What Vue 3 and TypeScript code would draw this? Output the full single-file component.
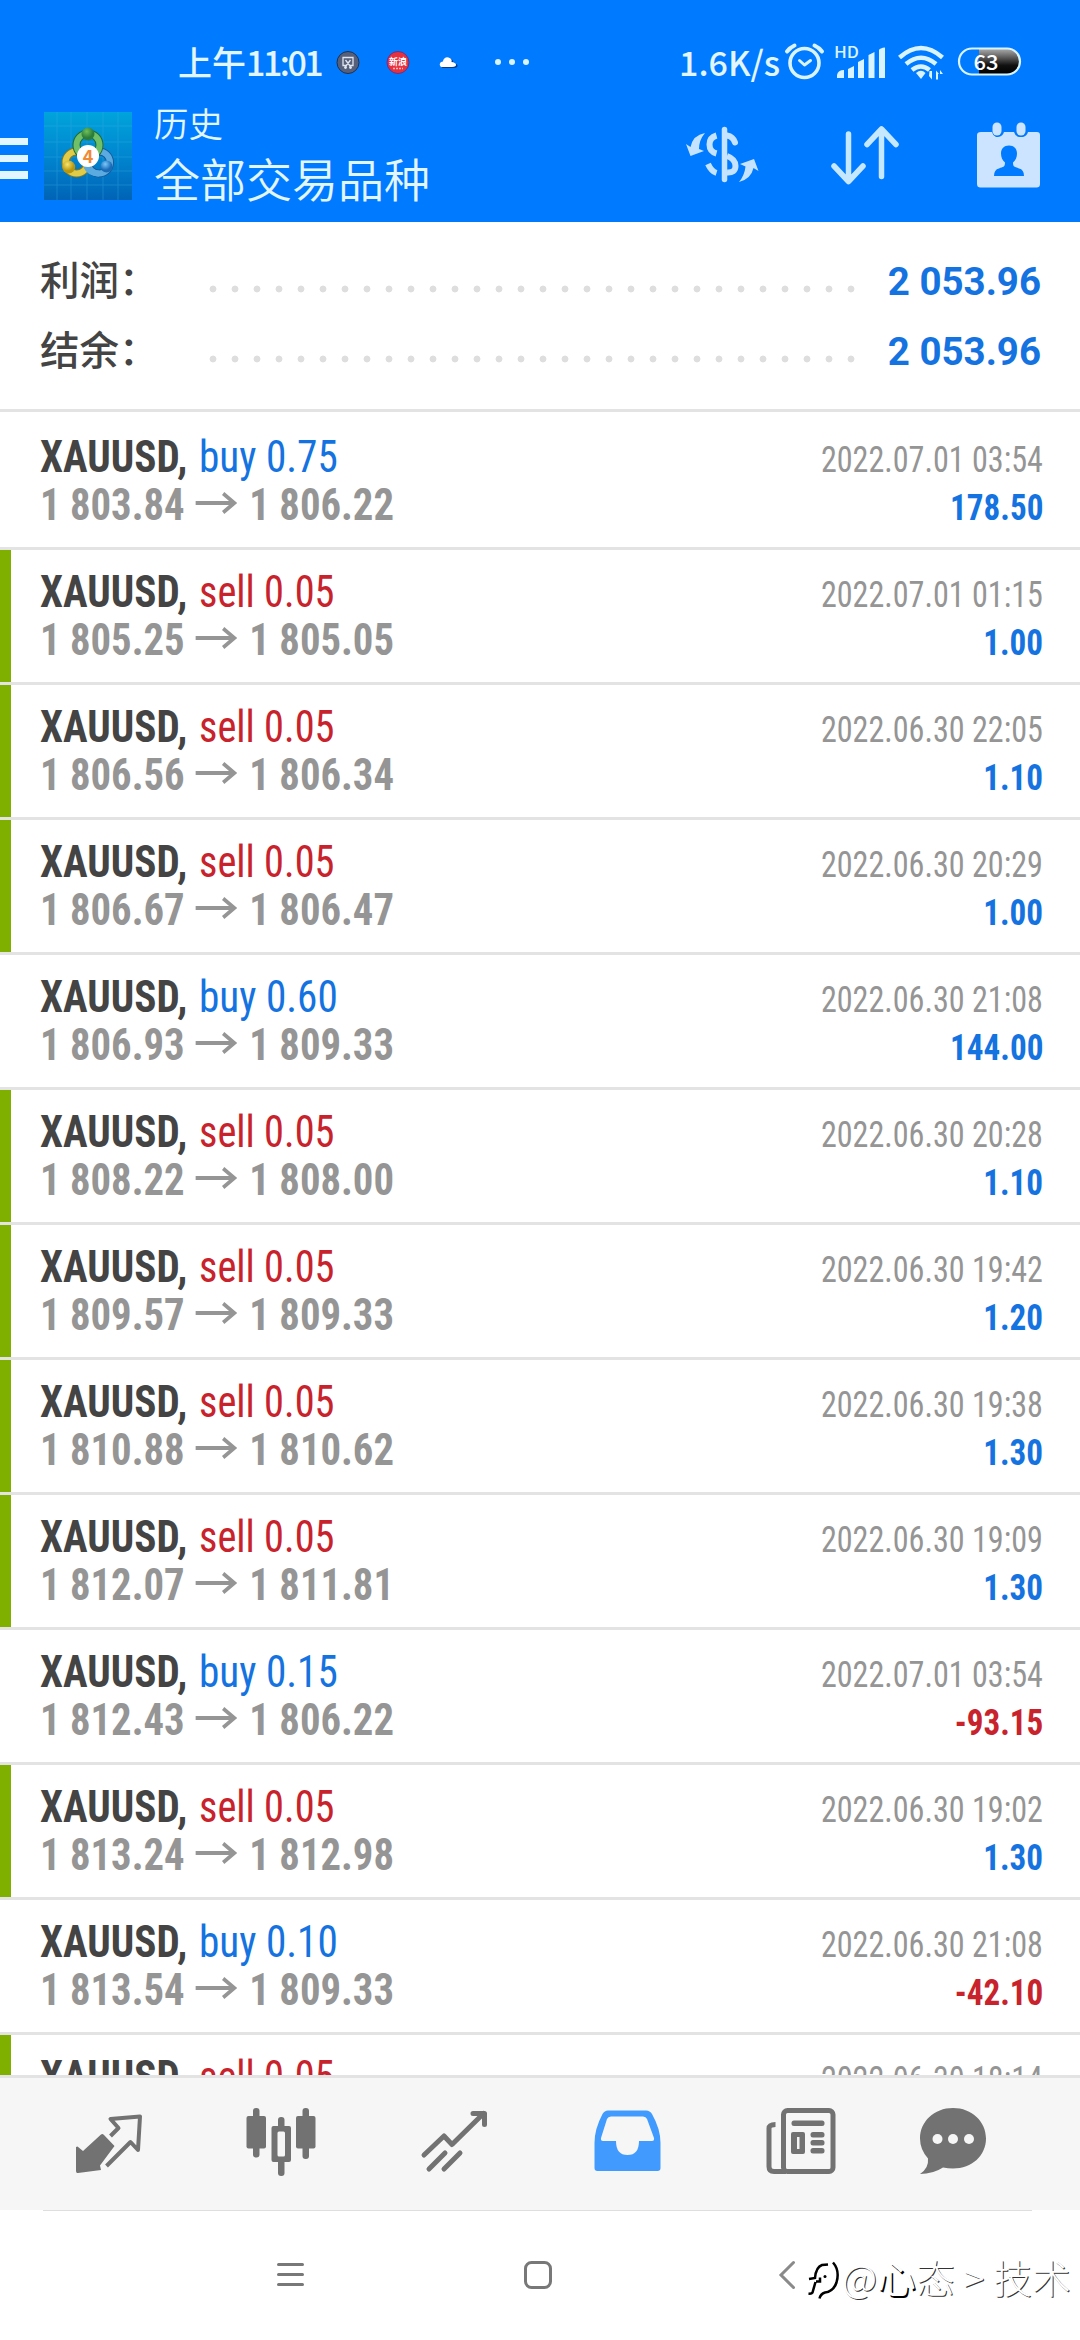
<script setup lang="ts">
interface Deal {
  side: 'buy' | 'sell'
  volume: string
  open: string
  close: string
  time: string
  profit: string
}

const summary = [
  { label: '利润', value: '2 053.96' },
  { label: '结余', value: '2 053.96' },
]

const d = (side: 'buy' | 'sell', volume: string, open: string, close: string, time: string, profit: string): Deal => ({
  side, volume, open, close, time, profit,
})

const deals: Deal[] = [
  d('buy', '0.75', '1 803.84', '1 806.22', '2022.07.01 03:54', '178.50'),
  d('sell', '0.05', '1 805.25', '1 805.05', '2022.07.01 01:15', '1.00'),
  d('sell', '0.05', '1 806.56', '1 806.34', '2022.06.30 22:05', '1.10'),
  d('sell', '0.05', '1 806.67', '1 806.47', '2022.06.30 20:29', '1.00'),
  d('buy', '0.60', '1 806.93', '1 809.33', '2022.06.30 21:08', '144.00'),
  d('sell', '0.05', '1 808.22', '1 808.00', '2022.06.30 20:28', '1.10'),
  d('sell', '0.05', '1 809.57', '1 809.33', '2022.06.30 19:42', '1.20'),
  d('sell', '0.05', '1 810.88', '1 810.62', '2022.06.30 19:38', '1.30'),
  d('sell', '0.05', '1 812.07', '1 811.81', '2022.06.30 19:09', '1.30'),
  d('buy', '0.15', '1 812.43', '1 806.22', '2022.07.01 03:54', '-93.15'),
  d('sell', '0.05', '1 813.24', '1 812.98', '2022.06.30 19:02', '1.30'),
  d('buy', '0.10', '1 813.54', '1 809.33', '2022.06.30 21:08', '-42.10'),
  d('sell', '0.05', '1 813.69', '1 813.42', '2022.06.30 18:14', '1.30'),
]
</script>

<template>
  <div class="screen">
    <header class="top">
      <div class="status">
        <span class="clock">上午<span class="digits">11:01</span></span>
        <svg class="notes" width="205" height="40" viewBox="330 42 205 40">
          <circle cx="348" cy="62.5" r="11" fill="#56607a" stroke="#20304f" stroke-width="1" />
          <path d="M346 65.500h-3V57.500h10v8h-3M345.500 60l5 6.500M350.500 60l-5 6.500" fill="none" stroke="#dfe6f2" stroke-width="1.300" />
          <circle cx="345.500" cy="67.500" r="1.400" fill="#dfe6f2" /><circle cx="350.500" cy="67.500" r="1.400" fill="#dfe6f2" />
          <circle cx="398" cy="62.500" r="11" fill="#e8313f" stroke="#5a2a8a" stroke-width=".8" />
          <text x="398" y="65" text-anchor="middle" font-size="9" font-weight="700" fill="#fff">新浪</text>
          <path d="M393 68.500h10" stroke="#ffb9b9" stroke-width="1.500" stroke-dasharray="2 1" />
          <path d="M441 67a3.500 3.500 0 0 1 0-5q2 0 2-1 1.500-4.500 5.500-3.500t3 4.500q4 .5 4.500 2.500t-4 2.500z" fill="#0a3c88" transform="translate(1.500 1)" />
          <path d="M441 67a3.500 3.500 0 0 1 0-5q2 0 2-1 1.500-4.500 5.500-3.500t3 4.500q4 .5 4.500 2.500t-4 2.500z" fill="#fff" />
          <g fill="#d9f3ff"><circle cx="498" cy="62" r="3" /><circle cx="512" cy="62" r="3" /><circle cx="526" cy="62" r="3" /></g>
        </svg>
        <span class="rate">1.6K/s</span>
        <svg class="signals" width="245" height="44" viewBox="780 40 245 44">
          <g fill="none" stroke="#d9f3ff">
            <circle cx="804.500" cy="63" r="14.500" stroke-width="3.600" />
            <path d="M799.500 60.500l5 4.500 6-4.500" stroke-width="3" stroke-linecap="round" stroke-linejoin="round" />
            <path d="M787 51.500q3-4 7.500-6M822 51.500q-3-4-7.500-6" stroke-width="4" stroke-linecap="round" />
          </g>
          <text x="834" y="58" font-size="15.500" font-weight="500" fill="#d9f3ff" textLength="25" lengthAdjust="spacingAndGlyphs">HD</text>
          <g fill="#d9f3ff">
            <path d="M837 78v-3q1-5 7-5v8zM848 78V69l6-3v12zM858 78V62l6-3v19zM868.500 78V55l6-3v26zM879 78V50q1-2 6-2.500V78z" />
            <path d="M916 73q5-4.500 9.500 0L921 79z" />
            <path d="M929.500 71h2.500v8.500l-3-3.500zM936 79.500v-9l3 3.500h-1v5.500zM940 70l3 4h-3z" />
          </g>
          <g fill="none" stroke="#d9f3ff" stroke-width="4.500">
            <path d="M899.500 57.500q21.500-19 43 0M906 64q15-12.500 30 0M912 70q9-7 17.500 0" />
          </g>
          <defs>
            <linearGradient id="battery" x1="0" y1="0" x2="0" y2="1"><stop offset="0" stop-color="#aaa" /><stop offset=".65" stop-color="#111" /><stop offset="1" stop-color="#000" /></linearGradient>
          </defs>
          <path d="M979 49h28a12.500 12.500 0 0 1 0 25h-28z" fill="url(#battery)" />
          <rect x="959" y="48.500" width="61" height="26" rx="13" fill="none" stroke="#d9f3ff" stroke-width="2.200" />
          <text x="973.500" y="69.500" font-size="21" font-weight="500" fill="#fff" textLength="25" lengthAdjust="spacingAndGlyphs">63</text>
        </svg>
      </div>
      <div class="appbar">
        <div class="menu"><i></i><i></i><i></i></div>
        <svg class="logo" width="88" height="88" viewBox="44 112 88 88">
          <defs>
            <linearGradient id="sea" x1="0" y1="0" x2="0" y2="1"><stop offset="0" stop-color="#00a4dc" /><stop offset=".5" stop-color="#0086cf" /><stop offset="1" stop-color="#0063b6" /></linearGradient>
            <radialGradient id="gr" cx=".4" cy=".3"><stop offset="0" stop-color="#6fbf5a" /><stop offset="1" stop-color="#2c7d3a" /></radialGradient>
            <radialGradient id="ye" cx=".4" cy=".3"><stop offset="0" stop-color="#f5e670" /><stop offset="1" stop-color="#b9960f" /></radialGradient>
            <radialGradient id="bl" cx=".4" cy=".3"><stop offset="0" stop-color="#7cc8fa" /><stop offset="1" stop-color="#1a6cb8" /></radialGradient>
          </defs>
          <rect x="44" y="112" width="88" height="88" fill="url(#sea)" />
          <path d="M57 112v88M71 112v88M87 112v88M103 112v88M118 112v88M44 126h88M44 142h88M44 157h88M44 171h88M44 185h88" stroke="#3ab0e6" stroke-width="1" opacity=".35" />
          <g fill="none">
            <circle cx="99" cy="162.500" r="11" stroke="#17599a" stroke-width="8" /><circle cx="99" cy="162.500" r="11" stroke="#5cabe0" stroke-width="6" />
            <circle cx="76.500" cy="162.500" r="11" stroke="#857a1c" stroke-width="8" /><circle cx="76.500" cy="162.500" r="11" stroke="#e0cc48" stroke-width="6" />
            <circle cx="88" cy="145" r="11.500" stroke="#1f6a34" stroke-width="8" /><circle cx="88" cy="145" r="11.500" stroke="#6fc068" stroke-width="6" />
            <path d="M86 166q4 8 13 7.500" stroke="#5cabe0" stroke-width="6" />
          </g>
          <circle cx="88" cy="134" r="6.500" fill="url(#gr)" />
          <circle cx="68.700" cy="167" r="6.500" fill="url(#ye)" />
          <circle cx="106.500" cy="166.500" r="6" fill="url(#bl)" />
          <circle cx="88" cy="156" r="11" fill="#fff" />
          <text x="88" y="162.500" text-anchor="middle" font-size="18" font-weight="700" fill="#f08a35">4</text>
        </svg>
        <div class="titles">
          <span class="t1">历史</span>
          <span class="t2">全部交易品种</span>
        </div>
        <svg class="act" width="80" height="70" viewBox="682 120 80 70">
          <g fill="none" stroke="#c5e3ff" stroke-width="6">
            <path d="M716.500 135.500q-7 2-7 9t7 9M716.500 173q-5-1.500-8.500-9" />
            <path d="M724.500 129.500v50" stroke-linecap="round" stroke-width="5.500" />
            <path d="M727 135.500q6 1 8 7" stroke-linecap="round" />
            <path d="M727 156q8.500 3 8.500 10t-8.500 6.500" />
          </g>
          <path d="M705 133q-12 2-14.500 14l-4.500-3 4.500 12 13.500-5-5-2q0-9 6-16zM739 182q12-3 14.500-14l5 3-4.500-12-14 5 5.500 2.500q-1 9-6.500 15.500z" fill="#c5e3ff" />
        </svg>
        <svg class="act2" width="80" height="70" viewBox="825 120 80 70">
          <path d="M848.500 134v47M834 166l14.500 15.500 14.500-15.500M881.500 176.500v-47M867 144.500l14.500-15.500 14.500 15.500" fill="none" stroke="#c5e8ff" stroke-width="5.500" stroke-linecap="round" stroke-linejoin="round" />
        </svg>
        <svg class="act3" width="68" height="70" viewBox="974 120 68 70">
          <path fill="#cce4ff" d="M980 132h11a7 7 0 0 0 4 5h2a7 7 0 0 0 6-5h10a7 7 0 0 0 5 5h4a7 7 0 0 0 5-5h9q3 0 3 3v49q0 3.500-3.500 3.500h-56q-3.500 0-3.500-3.500v-49q0-3 4-3z" />
          <rect x="991.500" y="122.500" width="9" height="13" rx="4.500" fill="#cce4ff" /><rect x="1015.500" y="122.500" width="9" height="13" rx="4.500" fill="#cce4ff" />
          <path fill="#007aff" d="M1008 145.500c5 0 8 3 8 8 0 4-1.500 7-4 9 0 5 2 4 6 6q5 1 5 7.500h-30q0-6.500 5-7.500c4-2 6-1 6-6-2.500-2-4-5-4-9 0-5 3-8 8-8z" />
        </svg>
      </div>
    </header>

    <section class="summary">
      <div v-for="s in summary" :key="s.label" class="sum-row">
        <span class="sum-label">{{ s.label }}：</span>
        <span class="dots"></span>
        <span class="sum-value">{{ s.value }}</span>
      </div>
    </section>

    <main class="list">
      <article v-for="(t, i) in deals" :key="i" class="deal" :class="t.side">
        <i class="flag"></i>
        <div class="line">
          <b class="symbol">XAUUSD,</b>
          <span class="side">{{ t.side }} {{ t.volume }}</span>
          <span class="right date">{{ t.time }}</span>
        </div>
        <div class="line">
          <span class="prices">
            <span>{{ t.open }}</span>
            <svg class="arrow" width="45" height="29" viewBox="0 0 45 29"><path d="M0 12h42M30 2.500l12 9.500-12 9.500" fill="none" stroke="#959595" stroke-width="4" /></svg>
            <span>{{ t.close }}</span>
          </span>
          <span class="right profit" :class="{ loss: t.profit[0] === '-' }">{{ t.profit }}</span>
        </div>
      </article>
    </main>

    <nav class="tabs">
      <svg width="1080" height="132" viewBox="0 2078 1080 132">
        <g fill="#727272">
          <path d="M101 2134.500q1.500-1 3 .5l10.500 11-14.500 19.500 1 4.500-23 3q-2 .5-2-2v-24l1.500-.5 5.500 4.500z" />
          <path d="M110.500 2136l8-8-8-9 29.500-2.500-2 33.500-7.500-8-24 24" fill="none" stroke="#727272" stroke-width="4" stroke-linejoin="round" />
          <rect x="246.500" y="2116" width="19.500" height="32.500" rx="2" /><rect x="253" y="2108" width="6.500" height="49.500" rx="3" />
          <rect x="296" y="2116" width="19.500" height="32.500" rx="2" /><rect x="302.500" y="2108" width="6.500" height="51" rx="3" />
          <rect x="278" y="2117" width="6.500" height="12" rx="3" /><rect x="278" y="2158" width="6.500" height="18" rx="3" />
          <path fill-rule="evenodd" d="M273.500 2126h15.500q2 0 2 2v32q0 2-2 2h-15.500q-2 0-2-2v-32q0-2 2-2zm5.500 5.500q-1.500 0-1.500 1.500v22q0 1.500 1.500 1.500h4.500q1.500 0 1.500-1.500v-22q0-1.500-1.500-1.500z" />
        </g>
        <g fill="none" stroke="#727272" stroke-width="5" stroke-linecap="round" stroke-linejoin="round">
          <path d="M424 2155l20-19 8 8.500 31.500-31M473 2113.500h11.500v11M429 2169l16-16M444 2169l16-16" />
        </g>
        <path fill="#419bff" fill-rule="evenodd" d="M608 2110.500h38q4 0 6 3.500 8.500 15 8.500 29v25q0 3-3 3h-60q-3 0-3-3v-25q0-14 8-29 2-3.500 5.500-3.500zm3 6q-3 0-4 2.500l-6 19q-.5 3 2 3h13q0 14 11.500 14t11.500-14h13q2.500 0 2-3l-7-19q-1-2.500-4-2.500z" />
        <g fill="none" stroke="#727272" stroke-width="5">
          <rect x="783.500" y="2110.500" width="49.500" height="61" rx="4" />
          <path d="M775.500 2124.500q-6.500 0-6.500 4v38q0 5 5 5h12" />
        </g>
        <g fill="#727272">
          <rect x="791.500" y="2120.500" width="33" height="5.500" rx="2.500" />
          <path fill-rule="evenodd" d="M793 2132h10q2 0 2 2v18q0 2-2 2h-10q-2 0-2-2v-18q0-2 2-2zm4 5v12h2.500v-12z" />
          <rect x="810.500" y="2132" width="14" height="5.500" rx="2.500" /><rect x="810.500" y="2140" width="14" height="5.500" rx="2.500" /><rect x="810.500" y="2148" width="14" height="5.500" rx="2.500" />
          <path d="M953 2108c19 0 33 13.500 33 30.500s-14 30-33 30q-5 0-10-1-10 6.500-23 6.500 9-6 8-15.500-8-9-8-20c0-17 14-30.500 33-30.500z" />
        </g>
        <g fill="#f6f6f6"><circle cx="937.500" cy="2139" r="5" /><circle cx="953" cy="2139" r="5" /><circle cx="969" cy="2139" r="5" /></g>
      </svg>
    </nav>

    <footer class="sysnav">
      <svg width="800" height="130" viewBox="0 2210 800 130">
        <g fill="none" stroke="#787878" stroke-width="3" stroke-linecap="round">
          <path d="M278.500 2264.500h24M278.500 2274.500h24M278.500 2284.500h24" />
          <rect x="525.500" y="2262.500" width="25" height="25" rx="6" />
          <path d="M793.500 2262.500l-12.500 12.500 12.500 12.500" stroke="#8a8a8a" />
        </g>
      </svg>
      <div class="mark">
        <svg width="38" height="50" viewBox="804 2256 38 50">
          <path d="M809 2282l6-1q1-11 7-13l6-.5M816 2284.500h4v-4M815.500 2285l-3 10.500q-1 1.500-4 1M833 2265.500q7 8 3.500 20-3 9-11.500 10-4.500 1.500-5.500 6" fill="none" stroke="#000" stroke-width="2.500" />
          <circle cx="825" cy="2279.500" r="1.500" />
        </svg>
        <span class="mark-text">@<span class="dark">心</span>态 &gt; 技术</span>
      </div>
    </footer>
  </div>
</template>

<style>
body { background: #fff; }
</style>

<style scoped>
.screen {
  width: 1080px;
  height: 2340px;
  overflow: hidden;
  display: flex;
  flex-direction: column;
  background: #fff;
  font-family: Roboto, "Noto Sans CJK SC", sans-serif;
}
svg { display: block; flex: none; }
.top { height: 222px; background: #007aff; flex: none; color: #e2f6ff; font-family: "Noto Sans CJK SC", sans-serif; }
.status { height: 84px; padding: 40px 0 0 178px; box-sizing: border-box; display: flex; align-items: center; }
.clock, .rate { font-size: 34px; line-height: 40px; font-weight: 500; white-space: nowrap; }
.clock { width: 152px; }
.digits { letter-spacing: -2.5px; }
.rate { width: 101px; margin-left: 144px; }
.appbar { display: flex; height: 138px; }
.menu { width: 28px; margin-right: 16px; padding-top: 54px; display: flex; flex-direction: column; gap: 9.5px; }
.menu i { height: 7.2px; background: #e2f6ff; }
.logo { margin-top: 28px; margin-right: 22px; }
.titles { width: 528px; display: flex; flex-direction: column; font-weight: 350; white-space: nowrap; }
.t1 { font-size: 34.5px; line-height: 50px; margin-top: 13px; }
.t2 { font-size: 46px; line-height: 60px; }
.act, .act2, .act3 { margin-top: 36px; }
.act2 { margin-left: 63px; }
.act3 { margin-left: 70px; }
.summary { height: 187px; flex: none; padding: 24px 39px 0 40px; box-sizing: border-box; }
.sum-row { height: 70px; display: flex; align-items: center; }
.sum-label { width: 162px; font: 500 39.5px/70px "Noto Sans CJK SC", sans-serif; color: #444; margin-top: -6px; white-space: nowrap; }
.dots { width: 660px; height: 22px; margin-top: 16px; background: radial-gradient(circle, #dedede 3px, transparent 3.8px) 0 0 / 22px 22px; }
.sum-value { margin-left: auto; margin-top: 1px; font-size: 38.5px; font-weight: 700; color: #1473e0; }
.list { height: 1666px; flex: none; overflow: hidden; border-top: 3px solid #e3e3e3; padding-top: 3px; box-sizing: border-box; }
.deal { height: 135px; box-sizing: border-box; border-bottom: 3px solid #e3e3e3; padding: 14px 37px 0 40px; position: relative; }
.flag { display: none; }
.sell .flag { display: block; position: absolute; left: 0; top: 0; bottom: 0; width: 11px; background: #7fb000; }
.line {
  display: flex;
  height: 48px;
  align-items: baseline;
  font-family: "Roboto Condensed", Roboto, sans-serif;
  font-stretch: 75%;
  font-size: 44px;
  line-height: 56px;
  white-space: nowrap;
}
.symbol { width: 158.5px; color: #444; transform: scaleX(.935); transform-origin: left; }
.side { color: #1473e0; transform: scaleX(.937); transform-origin: left; }
.sell .side { color: #c8232c; transform: scaleX(.917); }
.right { margin-left: auto; transform-origin: right; }
.date { font-size: 36px; color: #959595; transform: scaleX(.892); }
.prices { display: flex; align-items: baseline; font-weight: 700; color: #959595; transform: scaleX(.925); transform-origin: left; }
.arrow { margin: 0 13px 0 12px; }
.profit { font-size: 36px; font-weight: 700; color: #1473e0; transform: scaleX(.92); }
.profit.loss { color: #c8232c; }
.tabs { height: 135px; flex: none; box-sizing: border-box; border-top: 3px solid #e3e3e3; background: #f6f6f6; }
.sysnav { height: 130px; flex: none; display: flex; position: relative; }
.sysnav::before { content: ""; position: absolute; left: 43px; top: 0; width: 989px; height: 1px; background: #dedede; }
.mark { display: flex; margin: 43px 0 0 4px; }
.mark-text { font: 300 38.5px/46px "Noto Sans CJK SC", sans-serif; letter-spacing: .3px; color: #fff; text-shadow: 1px 1px 0 #333; white-space: nowrap; }
.dark { font-weight: 400; text-shadow: 1.5px 1.5px 0 #000; }
</style>
